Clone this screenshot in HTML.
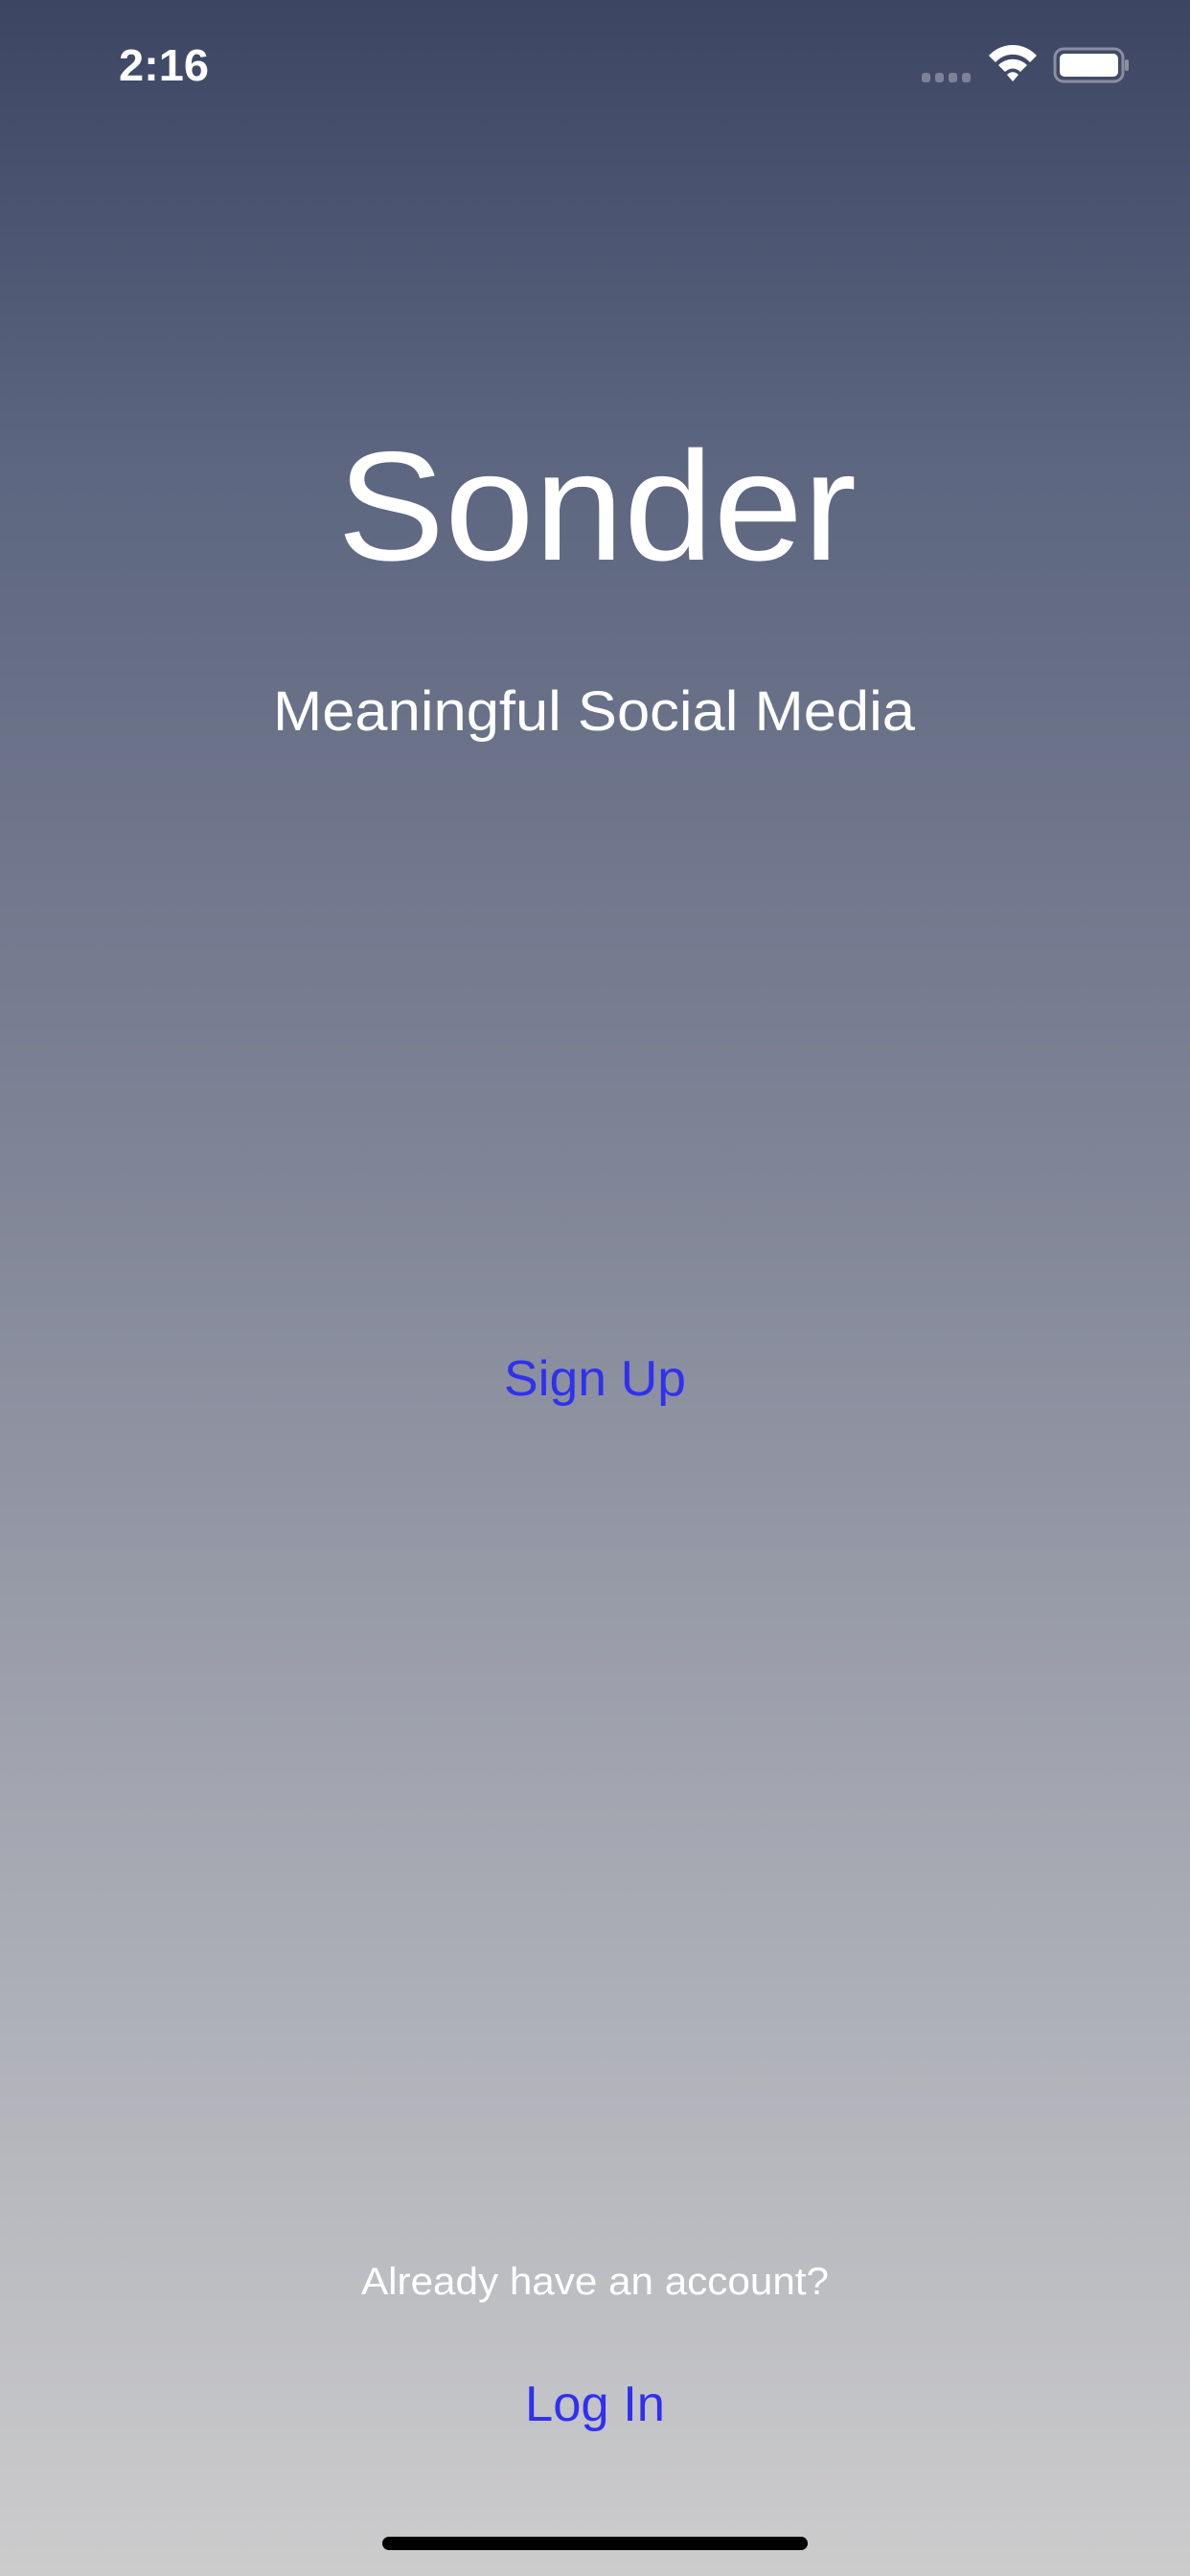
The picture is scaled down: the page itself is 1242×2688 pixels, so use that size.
<!DOCTYPE html>
<html><head><meta charset="utf-8"><style>
html,body{margin:0;padding:0;width:1242px;height:2688px;overflow:hidden}
body{background:linear-gradient(180deg,#3c4562 0%,#5d6680 18%,#7f8496 45%,#a3a6b0 70%,#cccccd 100%)}
svg{position:absolute;left:0;top:0}
</style></head><body>
<svg width="1242" height="2688" viewBox="0 0 1242 2688" font-family="Liberation Sans, sans-serif">
<text x="124" y="84" font-size="46" font-weight="600" fill="#fff" textLength="94" lengthAdjust="spacingAndGlyphs">2:16</text>
<g fill="#7d8296">
<rect x="962" y="76" width="9" height="10" rx="3"/><rect x="976" y="76" width="9" height="10" rx="3"/>
<rect x="990" y="76" width="9" height="10" rx="3"/><rect x="1004" y="76" width="9" height="10" rx="3"/>
</g>
<g fill="#fff" transform="translate(0,-4)">
<path d="M1032 62 A34 34 0 0 1 1082 62 L1075 69 A24 24 0 0 0 1039 69 Z"/>
<path d="M1042 72 A21 21 0 0 1 1072 72 L1065 79 A11 11 0 0 0 1049 79 Z"/>
<path d="M1051 82 A8 8 0 0 1 1063 82 L1057 89 Z"/>
</g>
<rect x="1101" y="51" width="71" height="34" rx="9" fill="none" stroke="#8a8fa2" stroke-width="3"/>
<rect x="1106" y="56" width="61" height="24" rx="5" fill="#fff"/>
<rect x="1174" y="62" width="4" height="12" rx="2" fill="#8a8fa2"/>
<text x="352" y="584" font-size="162" fill="#fff" textLength="542" lengthAdjust="spacingAndGlyphs">Sonder</text>
<text x="285" y="762" font-size="58" fill="#fff" textLength="670" lengthAdjust="spacingAndGlyphs">Meaningful Social Media</text>
<text x="526" y="1456" font-size="52" fill="#3030f0" textLength="190" lengthAdjust="spacingAndGlyphs">Sign Up</text>
<text x="377" y="2394" font-size="40" fill="#fff" textLength="488" lengthAdjust="spacingAndGlyphs">Already have an account?</text>
<text x="548" y="2526" font-size="52" fill="#3030f0" textLength="146" lengthAdjust="spacingAndGlyphs">Log In</text>
<rect x="399" y="2647" width="444" height="14" rx="7" fill="#000"/>
</svg>
</body></html>
